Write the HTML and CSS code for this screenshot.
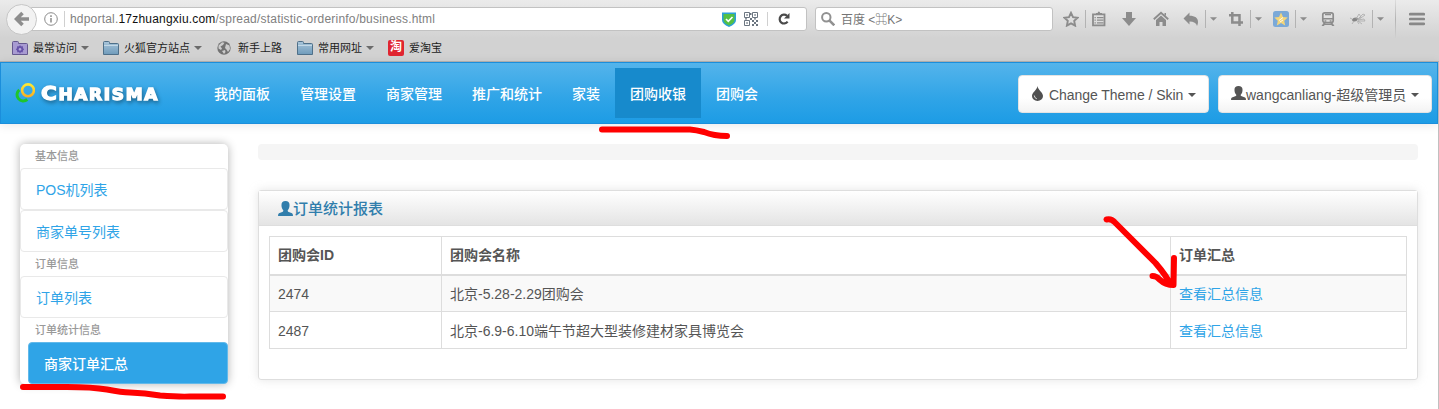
FILE: index.html
```html
<!DOCTYPE html>
<html lang="zh-CN">
<head>
<meta charset="utf-8">
<title>订单统计报表</title>
<link rel="stylesheet" href="styles.css">
</head>
<body>
<svg class="defs" width="0" height="0">
  <defs>
    <linearGradient id="fold" x1="0" y1="0" x2="0" y2="1"><stop offset="0" stop-color="#a9c5da"/><stop offset="1" stop-color="#6f9bbb"/></linearGradient>
    <linearGradient id="ringY" x1="0" y1="0" x2="0" y2="1"><stop offset="0" stop-color="#ffe832"/><stop offset="1" stop-color="#f9b023"/></linearGradient>
    <symbol id="folder" viewBox="0 0 16 14"><path d="M.5 13.5V1.5q0-1 1-1h4q1 0 1 1v1h8q1 0 1 1v10z" fill="url(#fold)" stroke="#4f7089"/><path d="M1 4.5h14" stroke="#c3d8e6"/></symbol>
    <symbol id="user" viewBox="0 0 16 15" preserveAspectRatio="none"><path d="M8 0C5.200 0 3.700 1.300 3.700 4c0 2.300.7 4.200 1.900 5.300.2.900-.1 1.300-1.100 1.700L1 12.300Q0 12.700 0 15h16q0-2.300-1-2.700L11.500 11c-1-.4-1.300-.8-1.100-1.700C11.600 8.200 12.300 6.300 12.300 4 12.300 1.300 10.800 0 8 0z" fill="currentColor"/></symbol>
    <symbol id="caret" viewBox="0 0 8 4"><path d="M0 0h8L4 4z" fill="currentColor"/></symbol>
  </defs>
</svg>
<div class="browser">
  <div class="toolbar">
    <div class="back"><svg width="16" height="16" viewBox="0 0 16 16"><path d="M8.500 2L2.500 8l6 6M3 8h12" fill="none" stroke="#8d8d8d" stroke-width="3.600"/></svg></div>
    <div class="urlbar">
      <svg class="info" width="14" height="14" viewBox="0 0 14 14"><circle cx="7" cy="7" r="6.300" fill="none" stroke="#8a8a8a"/><path d="M7 6v4.500M7 3.300v1.600" stroke="#8a8a8a" stroke-width="1.500"/></svg>
      <div class="url">hdportal.<b>17zhuangxiu.com</b>/spread/statistic-orderinfo/business.html</div>
      <svg class="shield" width="14" height="15" viewBox="0 0 14 15"><path d="M0 .5h14v7.500q0 4-7 7-7-3-7-7z" fill="#2b9fd8"/><path d="M1.500 2h11v6q0 3-5.500 5.500Q1.500 11 1.500 8z" fill="#55c043"/><path d="M4 7l2.300 2.300L10.500 5" fill="none" stroke="#fff" stroke-width="1.600"/></svg>
      <svg class="qr" width="14" height="14" viewBox="0 0 14 14"><path d="M.5.5h5v5h-5zM8.500.5h5v5h-5zM.5 8.500h5v5h-5z" fill="none" stroke="#6b7580"/><path d="M2.300 2.300h1.500v1.500H2.300zM10.300 2.300h1.500v1.500h-1.500zM2.300 10.300h1.500v1.500H2.300zM8 8h2v2H8zM12 8h2v2h-2zM10 10h2v2h-2zM8 12h2v2H8zM12 12h2v2h-2zM6 6h2v2H6zM10 6.300h2v1.200h-2zM6 1h1.500v2H6zM1 6.300h2v1.200H1z" fill="#6b7580"/></svg>
      <span class="usep"></span>
      <svg class="reload" width="12" height="12" viewBox="0 0 12 12"><path d="M9.600 8.700A4.400 4.400 0 1 1 9 2.800" fill="none" stroke="#4a4a4a" stroke-width="2.200"/><path d="M11.500 0v5.500H6z" fill="#4a4a4a"/></svg>
    </div>
    <div class="search">
      <svg width="14" height="14" viewBox="0 0 14 14"><circle cx="5.300" cy="5.300" r="4.200" fill="none" stroke="#919191" stroke-width="2"/><path d="M8.300 8.300l5 5" stroke="#919191" stroke-width="2.600"/></svg>
      <span>百度 &lt;⌘K&gt;</span>
    </div>
    <div class="tools">
      <svg width="16" height="16" viewBox="0 0 16 16"><path d="M8 1.800l2 4.300 4.600.6-3.400 3.200.9 4.700L8 12.300l-4.100 2.300.9-4.700L1.400 6.700 6 6.100z" fill="none" stroke="#8c8c8c" stroke-width="1.900"/></svg>
      <i class="tsep"></i>
      <svg width="16" height="16" viewBox="0 0 16 16"><path d="M2 3.300h11.500v11H2z" fill="none" stroke="#8c8c8c" stroke-width="1.800"/><path d="M5 4V2h1.700q0-1.500 1.200-1.500T9 2h2v2zM3.500 6h1.300v1.200H3.500zM6 6h6.500v1.200H6zM3.500 8.600h1.300v1.200H3.500zM6 8.600h6.500v1.200H6zM3.500 11.200h1.300v1.200H3.500zM6 11.200h6.500v1.200H6z" fill="#8c8c8c"/></svg>
      <svg width="16" height="16" viewBox="0 0 16 16"><path d="M5 1h6v6h4L8 15 1 7h4z" fill="#8c8c8c"/></svg>
      <svg width="16" height="16" viewBox="0 0 16 16"><path d="M.8 8.300L8 1.800l7.200 6.500" fill="none" stroke="#8c8c8c" stroke-width="1.900"/><path d="M8 4.500l5 4.600V15H9.500v-4h-3v4H3V9.100zM11.500 2H13v3l-1.500-1z" fill="#8c8c8c"/></svg>
      <svg width="16" height="16" viewBox="0 0 16 16"><path d="M6.500 1.500v3.300C12 4.800 15 7 15 11q0 2-1 4-1-4.500-7.500-4.500v3L.5 7.500z" fill="#8c8c8c"/></svg>
      <i class="tsep"></i><svg class="tc"><use href="#caret"/></svg>
      <svg width="16" height="16" viewBox="0 0 16 16"><path d="M4.300 1v10.500H15M1 4.300h10.500V15" fill="none" stroke="#8c8c8c" stroke-width="2.500"/></svg>
      <i class="tsep"></i><svg class="tc"><use href="#caret"/></svg>
      <svg width="16" height="16" viewBox="0 0 16 16"><rect width="16" height="16" rx="2.500" fill="#7ba9d8"/><path d="M8 1.500l2 4.500 4.700.5-3.500 3.200 1 4.800L8 12l-4.200 2.500 1-4.800-3.500-3.200L6 6z" fill="#f5d67a"/><path d="M6 9.500l4-3M7 11l3-2" stroke="#fff" stroke-width=".9"/></svg>
      <i class="tsep"></i><svg class="tc"><use href="#caret"/></svg>
      <svg width="16" height="16" viewBox="0 0 16 16"><rect x="2.800" y="1.800" width="10.400" height="9.800" rx="2" fill="none" stroke="#8c8c8c" stroke-width="1.700"/><path d="M5 3h6v1.200H5zM3 7h10v1.600H3zM4.500 9.300h1.800v1.500H4.500zM9.700 9.300h1.800v1.500H9.700zM3.500 12h2L4 15H1.500zM10.500 12h2l2 3H12zM4 12.800h8V14H4z" fill="#8c8c8c"/></svg>
      <svg width="16" height="16" viewBox="0 0 16 16"><ellipse cx="5" cy="8.500" rx="3" ry="1.800" transform="rotate(-20 5 8.500)" fill="#858585"/><path d="M6 8l3-5 2 3-4 3 6-6 2 1-7 5 6-1 1 2-7 0M4 10l-2 3M7 10l2 3M2 8L0 7M8 10l4 3" fill="none" stroke="#aaa" stroke-width=".8"/></svg>
      <i class="tsep"></i><svg class="tc"><use href="#caret"/></svg>
      <i class="tsep tall"></i>
      <svg width="16" height="16" viewBox="0 0 16 16"><path d="M1.200 3.200h13.600M1.200 8h13.600M1.200 12.800h13.600" stroke="#888" stroke-width="2.700" stroke-linecap="round"/></svg>
    </div>
  </div>
  <div class="bookmarks">
    <span class="bm b1"><svg width="16" height="14" viewBox="0 0 16 14"><path d="M.5 13.500V1.500q0-1 1-1h4q1 0 1 1v1h8q1 0 1 1v10z" fill="#a89bd2" stroke="#65588f"/><circle cx="8" cy="8.300" r="2.400" fill="none" stroke="#6652a8" stroke-width="1.800"/><path d="M8 4.300v8M4 8.300h8M5.200 5.500l5.600 5.600M10.800 5.500l-5.600 5.600" stroke="#6652a8" stroke-width="1"/><circle cx="8" cy="8.300" r="1.200" fill="#b5a9dc"/></svg>最常访问<svg class="bc"><use href="#caret"/></svg></span>
    <span class="bm b2"><svg width="16" height="14"><use href="#folder"/></svg>火狐官方站点<svg class="bc"><use href="#caret"/></svg></span>
    <span class="bm b3"><svg width="14" height="14" viewBox="0 0 14 14"><circle cx="7" cy="7" r="6.700" fill="#737373"/><path d="M1.500 4.500L5 1.200l2.500.5L6 4 3.500 5.500 5 7.500 4 9 1.500 7.500zM9 3l3.500 1.500L13 8l-2 3-1.500-2.500L8 7zM5 10l3-1 .5 2L7 13z" fill="#ccc"/></svg>新手上路</span>
    <span class="bm b4"><svg width="16" height="14"><use href="#folder"/></svg>常用网址<svg class="bc"><use href="#caret"/></svg></span>
    <span class="bm b5"><span class="tao">淘</span>爱淘宝</span>
  </div>
</div>
<div class="page">
  <div class="navbar">
    <div class="brand">
      <svg width="20" height="20" viewBox="0 0 20 20"><path d="M4.300 6.800a5.600 5.600 0 1 0 8 9.700" fill="none" stroke="#1fc52c" stroke-width="3"/><circle cx="13" cy="7.300" r="5.900" fill="none" stroke="url(#ringY)" stroke-width="2.600"/></svg>
      <svg class="word" width="126" height="30"><text x="6" y="22" textLength="118" lengthAdjust="spacingAndGlyphs"><tspan class="cap">C</tspan>HARISMA</text></svg>
    </div>
    <div class="menu">
      <a>我的面板</a><a>管理设置</a><a>商家管理</a><a>推广和统计</a><a>家装</a><a class="on">团购收银</a><a>团购会</a>
    </div>
    <div class="actions">
      <div class="btn theme"><svg width="11" height="15" viewBox="0 0 11 15"><path d="M5.500 0C6 4 11 6.500 11 10a5.500 5 0 0 1-11 0C0 6.500 5 4 5.500 0z" fill="#505050"/><path d="M2.300 9.500q0 2.500 2.500 3.300" fill="none" stroke="#ddd"/></svg><span class="lbl">Change Theme / Skin</span><svg class="nc"><use href="#caret"/></svg></div>
      <div class="btn who"><svg width="15" height="14"><use href="#user"/></svg><span class="lbl">wangcanliang-超级管理员</span><svg class="nc"><use href="#caret"/></svg></div>
    </div>
  </div>
  <div class="content">
    <div class="side">
      <div class="head">基本信息</div>
      <a>POS机列表</a>
      <a>商家单号列表</a>
      <div class="head">订单信息</div>
      <a>订单列表</a>
      <div class="head">订单统计信息</div>
      <a class="active">商家订单汇总</a>
    </div>
    <div class="main">
      <div class="crumb"></div>
      <div class="box">
        <div class="box-head"><svg width="15" height="15"><use href="#user"/></svg><span>订单统计报表</span></div>
        <table>
          <colgroup><col class="c1"><col class="c2"><col class="c3"></colgroup>
          <thead><tr><th>团购会ID</th><th>团购会名称</th><th>订单汇总</th></tr></thead>
          <tbody>
            <tr class="odd"><td>2474</td><td>北京-5.28-2.29团购会</td><td><a>查看汇总信息</a></td></tr>
            <tr><td>2487</td><td>北京-6.9-6.10端午节超大型装修建材家具博览会</td><td><a>查看汇总信息</a></td></tr>
          </tbody>
        </table>
      </div>
    </div>
  </div>
</div>
<svg class="marks" width="1439" height="409" viewBox="0 0 1439 409">
  <path d="M602 129.500h88q6 .5 14 2.500 10 4 23 4M23 387h44q25 0 40 2.500 15 3 23 3 15 .5 30 3 20 1.500 30 1h33M1106.500 219.500q5-1 8 2.500l41 41q12 14 15 22M1152.500 276q4 0 7 3.500 6 5.500 14 5.500l.5-27"/>
</svg>
</body>
</html>
```

FILE: styles.css
```css
* { box-sizing: border-box; }
body {
  margin: 0;
  width: 1439px;
  height: 409px;
  overflow: hidden;
  background: #fff;
  font: 14px/20px "Liberation Sans", "Noto Sans CJK SC", sans-serif;
  color: #555;
}
svg { flex: none; display: block; }
.defs { position: absolute; }

.browser {
  height: 62px;
  background: linear-gradient(#ebebeb, #d2d2d2 38px);
  border-bottom: 1px solid #b4b4b4;
}
.toolbar { display: flex; height: 38px; align-items: center; }
.back {
  flex: none;
  display: flex;
  align-items: center;
  justify-content: center;
  width: 31px;
  height: 31px;
  margin-left: 6px;
  border: 1px solid #c6c6c6;
  border-radius: 50%;
  background: #f2f2f2;
  z-index: 1;
}
.urlbar, .search {
  display: flex;
  align-items: center;
  flex: none;
  height: 24px;
  background: #fff;
  border: 1px solid #c2c2c2;
  border-radius: 3px;
}
.urlbar { width: 776px; margin-left: -6px; padding-left: 12px; border-radius: 0 3px 3px 0; }
.url {
  width: 664px;
  margin: 0 -6px 0 6px;
  padding-left: 5px;
  border-left: 1px solid #d0d0d0;
  line-height: 16px;
  font-size: 12px;
  letter-spacing: .2px;
  color: #808080;
  white-space: nowrap;
}
.url b { font-weight: 400; color: #111; }
.qr { margin-left: 8px; }
.usep { width: 1px; height: 14px; margin: 0 10px 0 9px; background: #d0d0d0; }
.search { width: 238px; margin-left: 8px; padding-left: 5px; font-size: 12px; color: #757575; }
.search span { margin-left: 6px; padding-top: 1px; white-space: nowrap; }
.tools {
  display: grid;
  grid-template-columns: 22px 6px 30px 32px 30px 22px 5px 18px 22px 5px 18px 22px 5px 20px 30px 22px 5px 18px 14px 16px;
  align-items: center;
  height: 38px;
  margin-left: 10px;
}
.tsep { width: 1px; height: 18px; background: #b3b3b3; }
.tall { height: 38px; background: linear-gradient(#ddd, #b3b3b3 50%, #d0d0d0); }
.tc { width: 7px; height: 4px; color: #8c8c8c; }
.bookmarks { display: flex; height: 20px; padding-left: 12px; font-size: 11px; color: #1c1c1c; }
.bm { display: flex; align-items: center; height: 20px; white-space: nowrap; }
.bm > :first-child { margin-right: 5px; }
.bc { width: 8px; height: 4px; margin-left: 4px; color: #6b6b6b; }
.b2 { margin-left: 14px; }
.b3 { margin-left: 15px; }
.b3 > :first-child { margin-right: 7px; }
.b4 { margin-left: 15px; }
.b5 { margin-left: 14px; }
.tao {
  width: 16px;
  height: 16px;
  border-radius: 2px;
  background: #e02531;
  color: #fff;
  font-weight: 700;
  font-size: 12px;
  line-height: 15px;
  text-align: center;
}

.page { height: 347px; border-right: 1px solid #c0c0c0; }
.navbar {
  display: flex;
  height: 62px;
  padding-top: 5px;
  border: 1px solid #1b8edb;
  background: linear-gradient(#54b4eb, #2fa4e7 60%, #1d9ce5);
  box-shadow: 0 1px 10px rgba(0, 0, 0, .1);
}
.brand { display: flex; align-items: center; width: 183px; height: 50px; padding-left: 14px; }
.word { overflow: visible; filter: drop-shadow(1px 2px 2px rgba(0, 0, 0, .4)); }
.word text {
  font: 700 15px "DejaVu Sans", sans-serif;
  letter-spacing: 1.5px;
  fill: #fff;
  stroke: #fff;
  stroke-width: 1.3px;
}
.word .cap { font-size: 19px; }
.menu { display: flex; flex: 1; padding-left: 15px; }
.menu a { height: 50px; padding: 16px 15px 14px; color: #fff; font-weight: 500; white-space: nowrap; }
.menu .on { background: #178acc; }
.actions { display: flex; gap: 9px; padding: 7px 5px 0 0; }
.btn {
  display: flex;
  align-items: center;
  height: 38px;
  padding: 1px 0 0 13px;
  border: 1px solid #e3e3e3;
  border-radius: 4px;
  background: linear-gradient(#fff 60%, #f3f3f3);
  color: #555;
  white-space: nowrap;
}
.btn > :first-child { margin-top: -3px; }
.theme { width: 191px; }
.theme .lbl { margin-left: 6px; letter-spacing: -.05px; }
.who { width: 214px; padding-left: 12px; }
.lbl { flex: none; }
.nc { width: 8px; height: 4px; margin-left: 5px; }

.content { display: flex; padding: 20px 20px 0; gap: 30px; }
.side {
  flex: none;
  width: 208px;
  height: 240px;
  border-radius: 5px;
  background: #fff;
  box-shadow: 0 0 10px rgba(0, 0, 0, .3);
}
.head { height: 24px; padding-left: 15px; font-size: 11px; font-weight: 500; line-height: 24px; color: #999; }
.side a {
  display: block;
  height: 42px;
  padding: 11px 15px;
  border: 1px solid #e9e9e9;
  border-radius: 4px;
  color: #2fa4e7;
}
.side .active { margin-left: 8px; background: #2fa4e7; border-color: #62b9ea; color: #fff; font-weight: 500; }
.main { flex: 1; }
.crumb { height: 16px; border-radius: 4px; background: #f5f5f5; }
.box {
  height: 190px;
  margin-top: 30px;
  border: 1px solid #dedede;
  border-radius: 3px;
  box-shadow: 0 0 10px rgba(189, 189, 189, .4);
}
.box-head {
  display: flex;
  align-items: center;
  height: 35px;
  padding-left: 19px;
  border-bottom: 1px solid #dedede;
  background: linear-gradient(#fff, #e4e4e4);
  color: #317eac;
  font-size: 15px;
  font-weight: 500;
}
.box-head span { padding-top: 1px; }
table {
  width: 1138px;
  margin: 10px 0 0 10px;
  border-collapse: collapse;
  table-layout: fixed;
}
.c1 { width: 172px; }
.c2 { width: 729px; }
th, td { height: 37px; padding: 1px 8px 0; border: 1px solid #ddd; text-align: left; white-space: nowrap; }
th { border-bottom-width: 2px; height: 38px; padding-top: 0; font-weight: 700; }
.odd { background: #f9f9f9; }
td a { color: #2fa4e7; }
.marks { position: absolute; left: 0; top: 0; pointer-events: none; }
.marks path { fill: none; stroke: #f00; stroke-width: 6; stroke-linecap: round; stroke-linejoin: round; }
```
